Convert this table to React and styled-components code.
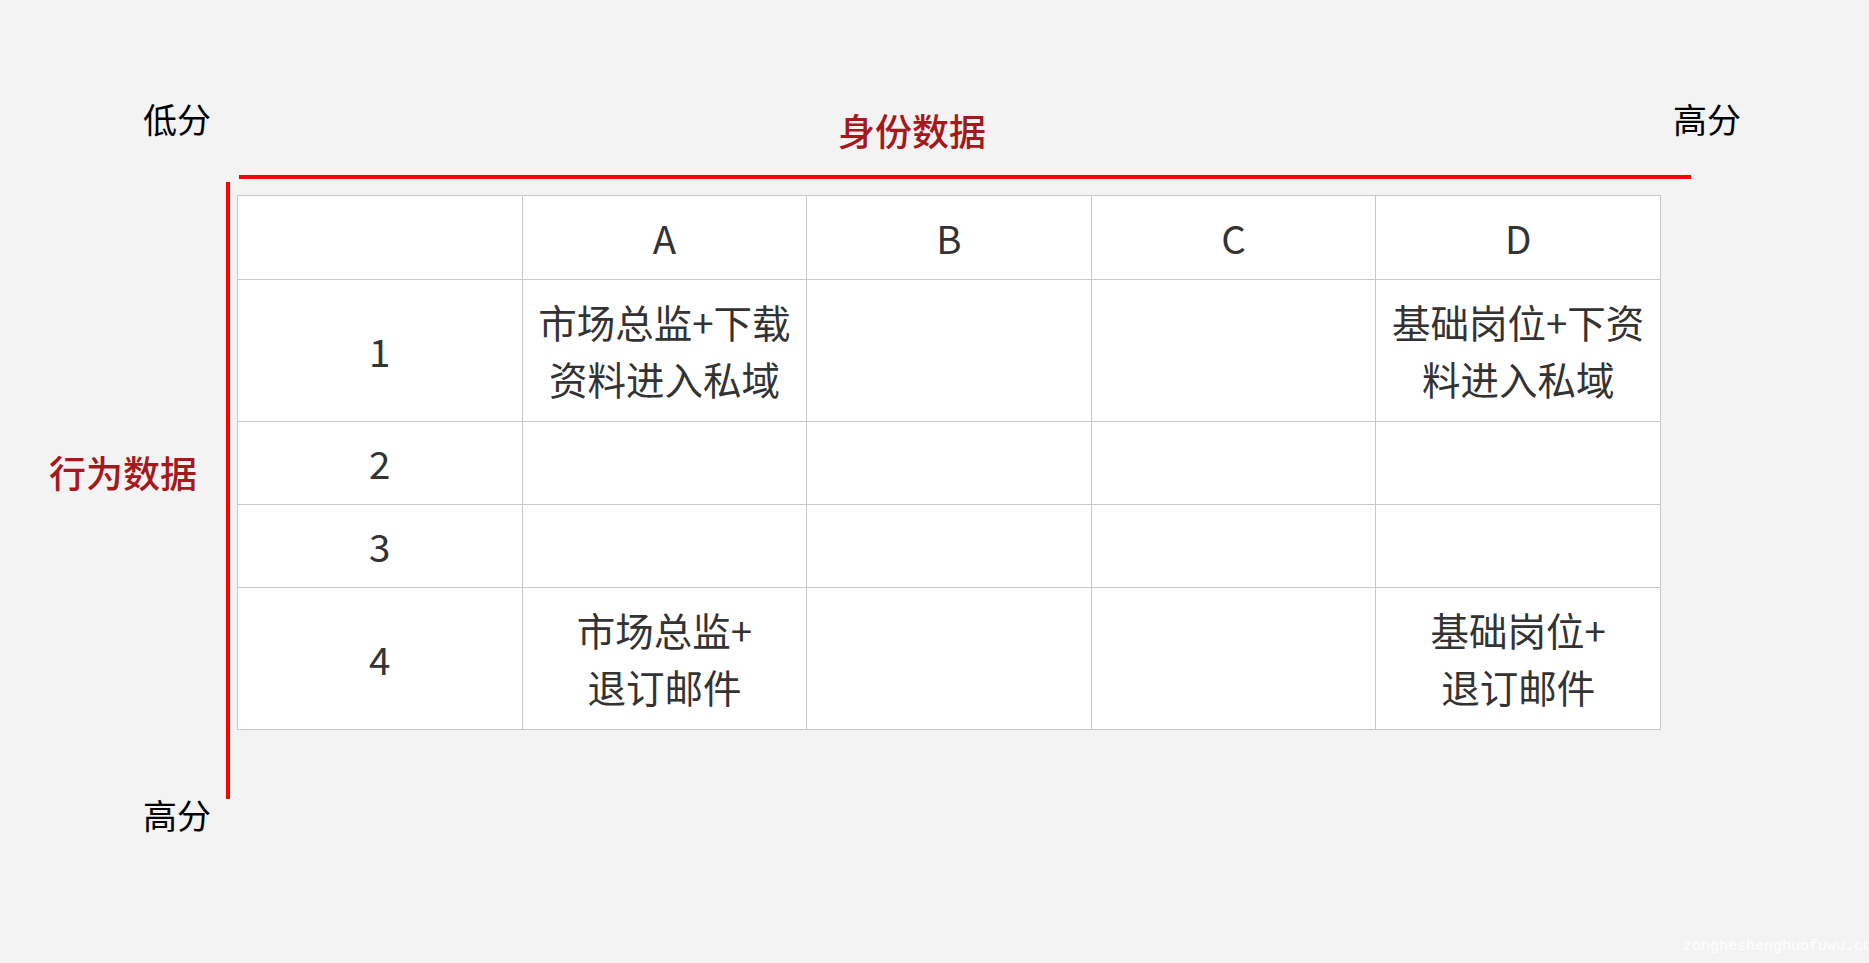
import React from 'react'
import styled, { createGlobalStyle } from 'styled-components'

const GlobalStyle = createGlobalStyle`
  html, body {
    margin: 0;
    padding: 0;
    background: #f3f3f3;
  }
  body {
    font-family: "Noto Sans CJK SC", "Noto Sans", sans-serif;
  }
`

const columns = ['A', 'B', 'C', 'D']

const rows = [
  { id: '1', tall: true, cells: [['市场总监+下载', '资料进入私域'], null, null, ['基础岗位+下资', '料进入私域']] },
  { id: '2', cells: [null, null, null, null] },
  { id: '3', cells: [null, null, null, null] },
  { id: '4', tall: true, cells: [['市场总监+', '退订邮件'], null, null, ['基础岗位+', '退订邮件']] },
]

const App = () => {
  return (
    <Page>
      <GlobalStyle />
      <TopRow>
        <ScoreLabel>低分</ScoreLabel>
        <AxisTitle offset={627} top={112}>身份数据</AxisTitle>
        <ScoreLabel offset={687}>高分</ScoreLabel>
      </TopRow>
      <HLine />

      <Body>
        <SideArea>
          <AxisTitle top={272}>行为数据</AxisTitle>
        </SideArea>
        <VLine />
        <TableArea>
          <Matrix>
            <colgroup>
              {[0, 1, 2, 3, 4].map(i => <col key={i} />)}
            </colgroup>
            <tbody>
              <Row height={84}>
                <Cell />
                {columns.map(c => <Cell key={c}>{c}</Cell>)}
              </Row>
              {rows.map(r => (
                <Row key={r.id} height={r.tall ? 142 : 83}>
                  <Cell>{r.id}</Cell>
                  {r.cells.map((lines, i) => (
                    <Cell key={i}>
                      {lines && lines.map(l => <Line key={l}>{l}</Line>)}
                    </Cell>
                  ))}
                </Row>
              ))}
            </tbody>
          </Matrix>
        </TableArea>
      </Body>

      <BottomRow>
        <ScoreLabel>高分</ScoreLabel>
      </BottomRow>

      <Watermark>zongheshenghuofuwu.co</Watermark>
    </Page>
  )
}

export default App

const Page = styled.div`
  position: relative;
  width: 1869px;
  height: 963px;
  overflow: hidden;
  background: #f3f3f3;
`

const TopRow = styled.div`
  display: flex;
  align-items: flex-start;
  height: 175px;
  padding-left: 143px;
  box-sizing: border-box;
`

const ScoreLabel = styled.div`
  margin-top: 102px;
  margin-left: ${props => props.offset || 0}px;
  font-size: 34px;
  line-height: 1;
  color: #000;
  white-space: nowrap;
`

const AxisTitle = styled.div`
  margin-top: ${props => props.top}px;
  margin-left: ${props => props.offset || 0}px;
  font-size: 37px;
  font-weight: 500;
  line-height: 1;
  color: #a5181c;
  white-space: nowrap;
`

const HLine = styled.div`
  margin-left: 239px;
  width: 1452px;
  height: 4px;
  background: #ff0000;
`

const Body = styled.div`
  display: flex;
  margin-top: 3px;
  height: 617px;
`

const SideArea = styled.div`
  width: 226px;
  padding-left: 49px;
  box-sizing: border-box;
`

const VLine = styled.div`
  width: 4px;
  height: 100%;
  background: #ff0000;
`

const TableArea = styled.div`
  padding: 13px 0 0 7px;
`

const Matrix = styled.table`
  width: 1424px;
  table-layout: fixed;
  border-collapse: collapse;
  background: #fff;
  col {
    width: 20%;
  }
`

const Row = styled.tr`
  height: ${props => props.height}px;
`

const Cell = styled.td`
  border: 1px solid #c8c8cc;
  padding: 0 8px 1px;
  text-align: center;
  vertical-align: middle;
  font-size: 38.5px;
  line-height: 57px;
  color: #333;
`

const Line = styled.div`
  white-space: nowrap;
`

const BottomRow = styled.div`
  margin-top: -1px;
  padding-left: 143px;
  div {
    margin-top: 0;
  }
`

const Watermark = styled.div`
  position: absolute;
  left: 1683px;
  top: 938px;
  font-family: "Liberation Mono", "DejaVu Sans Mono", monospace;
  font-size: 15px;
  color: #ffffff;
  white-space: nowrap;
`
